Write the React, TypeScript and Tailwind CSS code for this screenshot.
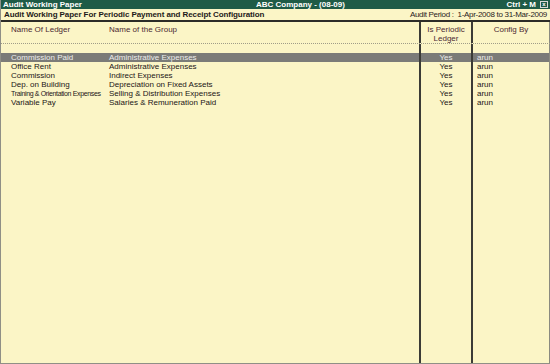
const rows = [
  { ledger: "Commission Paid", group: "Administrative Expenses", periodic: "Yes", by: "arun", active: true },
  { ledger: "Office Rent", group: "Administrative Expenses", periodic: "Yes", by: "arun" },
  { ledger: "Commission", group: "Indirect Expenses", periodic: "Yes", by: "arun" },
  { ledger: "Dep. on  Building", group: "Depreciation on Fixed Assets", periodic: "Yes", by: "arun" },
  { ledger: "Training & Orientation Expenses", group: "Selling & Distribution Expenses", periodic: "Yes", by: "arun", narrow: true },
  { ledger: "Variable Pay", group: "Salaries & Remuneration Paid", periodic: "Yes", by: "arun" },
];

function Row({
  children,
  className = "",
}: {
  children: [React.ReactNode, React.ReactNode, React.ReactNode];
  className?: string;
}) {
  return (
    <div className={`grid grid-cols-[420px_52px_1fr] ${className}`}>
      <div className="border-r-2 border-[#3b3b36] min-w-0">{children[0]}</div>
      <div className="border-r-2 border-[#3b3b36]">{children[1]}</div>
      <div className="border-r border-[#8a8a80]">{children[2]}</div>
    </div>
  );
}

export default function App() {
  return (
    <div className="w-[550px] h-[364px] flex flex-col bg-[#fbf5c6] border-l border-b border-[#8f8f86] font-['Liberation_Sans',Arial,sans-serif] text-[8px] leading-[9px] text-[#2a2222] overflow-hidden">
      {/* title bar */}
      <div className="h-[9px] flex items-center bg-[#1f5b47] text-white font-bold leading-[9px] pl-[2px]">
        <span className="w-[253px]">Audit Working Paper</span>
        <span>ABC Company - (08-09)</span>
        <span className="ml-auto mr-[4px]">Ctrl + M</span>
        <span className="w-[8px] h-[7px] mr-[2px] border border-[#d8d8d8] text-[6px] leading-[5px] text-center">x</span>
      </div>

      {/* report heading */}
      <div className="h-[13px] flex items-center justify-between pl-[3px] pr-[3px] border-b-2 border-[#2c2c28]">
        <span className="font-bold text-[#1e1a1a] tracking-[-0.08px]">
          Audit Working Paper For Periodic Payment and Receipt Configuration
        </span>
        <span className="text-[#2a2222] tracking-[-0.3px]">Audit Period :&nbsp; 1-Apr-2008 to 31-Mar-2009</span>
      </div>

      {/* column headers */}
      <Row className="h-[21px] text-[#4b2a33]">
        <div className="flex pt-[3px] pl-[10px]">
          <span className="w-[98px]">Name Of Ledger</span>
          <span>Name of the Group</span>
        </div>
        <div className="pt-[3px] text-center">
          Is Periodic
          <br />
          Ledger
        </div>
        <div className="pt-[3px] text-center">Config By</div>
      </Row>
      <div className="border-t border-dotted border-[#a09d88]" />
      <Row className="h-[9px]">
        <div />
        <div />
        <div />
      </Row>

      {rows.map((r) => (
        <Row
          key={r.ledger}
          className={`h-[9px] ${r.active ? "bg-[#7b7b78] text-[#ececec]" : "text-[#1c1616]"}`}
        >
          <div className="flex pl-[10px] whitespace-nowrap">
            <span className={`w-[98px] ${r.narrow ? "text-[7px] tracking-[-0.35px]" : ""}`}>{r.ledger}</span>
            <span>{r.group}</span>
          </div>
          <div className="text-center">{r.periodic}</div>
          <div className="pl-[4px]">{r.by}</div>
        </Row>
      ))}

      <Row className="flex-1">
        <div />
        <div />
        <div />
      </Row>
    </div>
  );
}
